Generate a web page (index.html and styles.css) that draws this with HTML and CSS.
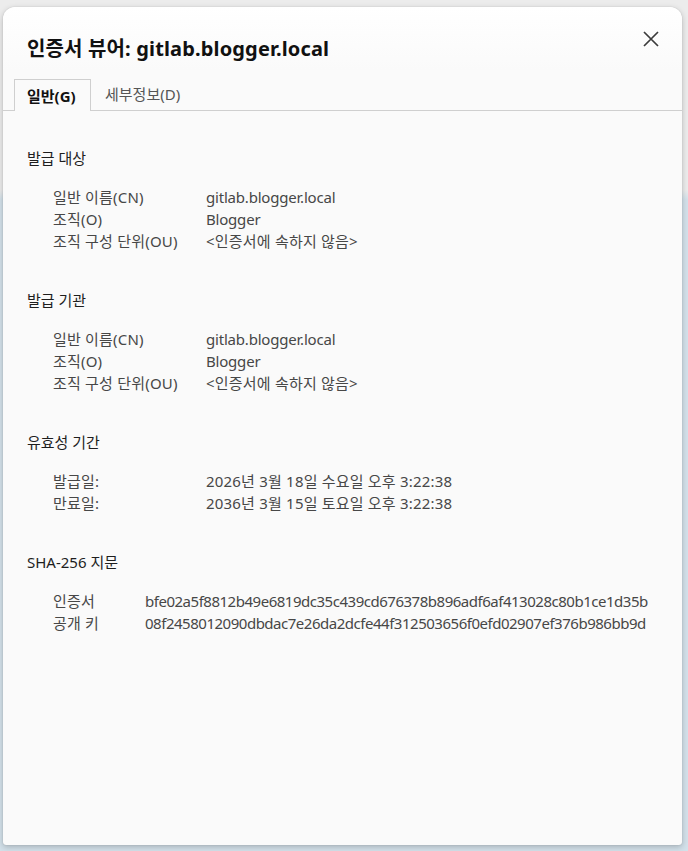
FILE: index.html
```html
<!DOCTYPE html>
<html lang="ko">
<head>
<meta charset="utf-8">
<title>인증서 뷰어</title>
<link rel="stylesheet" href="styles.css">
</head>
<body>
<div class="dialog">
  <div class="header">
    <h1 class="title">인증서 뷰어: gitlab.blogger.local</h1>
    <button class="close" aria-label="닫기">
      <svg width="18" height="18" viewBox="0 0 18 18"><path d="M2 2 L16 16 M16 2 L2 16" stroke="#3c3c3c" stroke-width="1.7" fill="none"/></svg>
    </button>
  </div>
  <div class="tabs">
    <div class="tab active">일반(G)</div>
    <div class="tab">세부정보(D)</div>
  </div>
  <div class="content">
    <section class="sec">
      <h2 class="sec-title">발급 대상</h2>
      <div class="rows">
        <div class="row"><span class="lbl">일반 이름(CN)</span><span class="val">gitlab.blogger.local</span></div>
        <div class="row"><span class="lbl">조직(O)</span><span class="val">Blogger</span></div>
        <div class="row"><span class="lbl">조직 구성 단위(OU)</span><span class="val kr">&lt;인증서에 속하지 않음&gt;</span></div>
      </div>
    </section>
    <section class="sec">
      <h2 class="sec-title">발급 기관</h2>
      <div class="rows">
        <div class="row"><span class="lbl">일반 이름(CN)</span><span class="val">gitlab.blogger.local</span></div>
        <div class="row"><span class="lbl">조직(O)</span><span class="val">Blogger</span></div>
        <div class="row"><span class="lbl">조직 구성 단위(OU)</span><span class="val kr">&lt;인증서에 속하지 않음&gt;</span></div>
      </div>
    </section>
    <section class="sec">
      <h2 class="sec-title">유효성 기간</h2>
      <div class="rows">
        <div class="row"><span class="lbl">발급일:</span><span class="val kr">2026년 3월 18일 수요일 오후 3:22:38</span></div>
        <div class="row"><span class="lbl">만료일:</span><span class="val kr">2036년 3월 15일 토요일 오후 3:22:38</span></div>
      </div>
    </section>
    <section class="sec">
      <h2 class="sec-title">SHA-256 지문</h2>
      <div class="rows fp">
        <div class="row"><span class="lbl">인증서</span><span class="val">bfe02a5f8812b49e6819dc35c439cd676378b896adf6af413028c80b1ce1d35b</span></div>
        <div class="row"><span class="lbl">공개 키</span><span class="val">08f2458012090dbdac7e26da2dcfe44f312503656f0efd02907ef376b986bb9d</span></div>
      </div>
    </section>
  </div>
</div>
</body>
</html>
```

FILE: styles.css
```css
html, body {
  margin: 0;
  padding: 0;
}
body {
  background: linear-gradient(to bottom, #ececec 0, #ececec 190px, #d3e1ea 200px);
  font-family: "Noto Sans", "Noto Sans CJK KR", sans-serif;
  width: 688px;
  height: 851px;
  overflow: hidden;
  padding-top: 7px;
  box-sizing: border-box;
}
.dialog {
  margin-left: 3px;
  width: 679px;
  height: 838px;
  background: #fafafa;
  border-radius: 12px 12px 3px 3px;
  box-shadow: 0 2px 6px rgba(0,0,0,0.22), 0 0 1px rgba(0,0,0,0.25);
  display: flex;
  flex-direction: column;
  overflow: hidden;
}
.header {
  background: linear-gradient(#ffffff, #fafafa);
  display: flex;
  align-items: center;
  justify-content: space-between;
  padding: 16px 22px 0 24px;
  height: 48px;
}
.title {
  margin: 0;
  font-size: 20px;
  font-weight: 700;
  color: #111;
  letter-spacing: 0.15px;
}
.close {
  border: 0;
  background: none;
  padding: 0;
  width: 18px;
  height: 18px;
  margin-top: -16px;
  display: flex;
}
.tabs {
  display: flex;
  padding-left: 11px;
  margin-top: 8px;
  border-bottom: 1px solid #cfcfcf;
  height: 31px;
}
.tab {
  padding: 0 14px;
  font-size: 15px;
  line-height: 31px;
  color: #555;
  letter-spacing: 0;
}
.tab.active {
  color: #111;
  font-weight: 700;
  background: #fafafa;
  border: 1px solid #cfcfcf;
  border-bottom: 0;
  margin-bottom: -1px;
  height: 32px;
  line-height: 32px;
  box-sizing: border-box;
  padding: 0 0 0 12px;
  width: 77px;
}
.content {
  padding: 37px 24px 0 24px;
  display: flex;
  flex-direction: column;
  gap: 38px;
}
.sec-title {
  margin: 0;
  font-size: 15px;
  font-weight: 400;
  line-height: 20px;
  color: #1e1e1e;
  letter-spacing: 0;
}
.rows {
  margin-top: 18px;
  padding-left: 26px;
  display: flex;
  flex-direction: column;
}
.row {
  display: flex;
  font-size: 15px;
  line-height: 22px;
  color: #474747;
}
.lbl {
  width: 153px;
  flex: none;
  letter-spacing: 0.2px;
}
.val {
  letter-spacing: -0.2px;
}
.val.kr {
  letter-spacing: 0.2px;
}
.fp .lbl {
  width: 92px;
}
.fp .val {
  letter-spacing: -0.48px;
}
```
